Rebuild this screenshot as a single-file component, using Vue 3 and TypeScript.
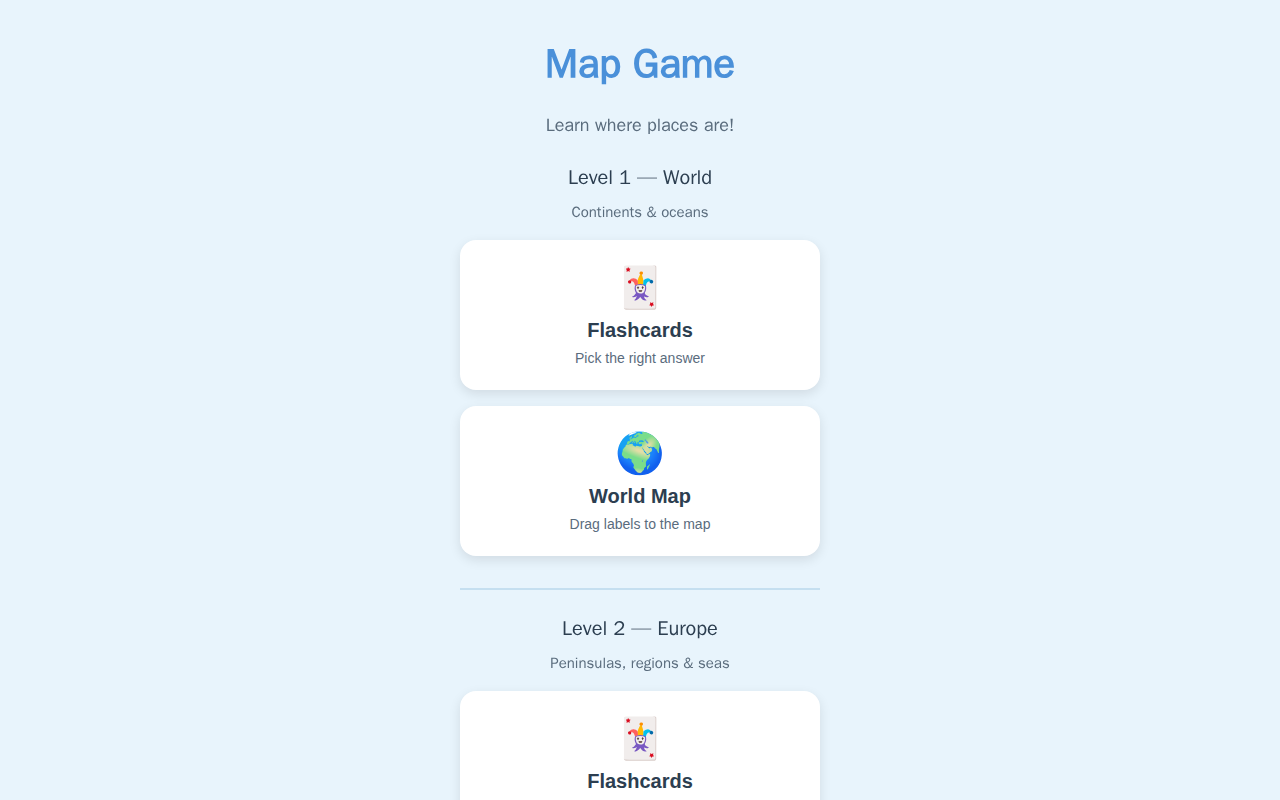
<script setup lang="ts">
interface Game { icon: string; title: string; text: string }
interface Level { title: string; place: string; text: string; games: Game[] }

const levels: Level[] = [
  {
    title: 'Level 1',
    place: 'World',
    text: 'Continents & oceans',
    games: [
      { icon: '🃏', title: 'Flashcards', text: 'Pick the right answer' },
      { icon: '🌍', title: 'World Map', text: 'Drag labels to the map' },
    ],
  },
  {
    title: 'Level 2',
    place: 'Europe',
    text: 'Peninsulas, regions & seas',
    games: [{ icon: '🃏', title: 'Flashcards', text: 'Pick the right answer' }],
  },
]
</script>

<template>
  <main class="home">
    <h1>Map Game</h1>
    <p class="intro">Learn where places are!</p>
    <section v-for="level in levels" :key="level.title" class="level">
      <h2>{{ level.title }} — {{ level.place }}</h2>
      <p class="about">{{ level.text }}</p>
      <div class="games">
        <button v-for="game in level.games" :key="game.title" type="button" class="card">
          <span class="icon">{{ game.icon }}</span>
          <span class="name">{{ game.title }}</span>
          <span class="text">{{ game.text }}</span>
        </button>
      </div>
    </section>
  </main>
</template>

<style>
body {
  margin: 0;
  background: #e8f4fc;
}
html {
  scrollbar-width: none;
}
</style>

<style scoped>
.home {
  box-sizing: border-box;
  min-height: 100vh;
  display: flex;
  flex-direction: column;
  align-items: center;
  padding: 40px 16px;
  font-family: "WenQuanYi Zen Hei", "Liberation Sans", sans-serif;
  color: #2c3e50;
  text-align: center;
}
h1 {
  margin: 0 0 24px;
  font-size: 40px;
  font-weight: 800;
  line-height: 48px;
  color: #4a90d9;
}
.intro {
  margin: 0 0 26px;
  font-size: 18px;
  line-height: 26px;
  color: #5a6c7d;
}
.level {
  width: 100%;
  max-width: 360px;
}
.level + .level {
  margin-top: 32px;
  padding-top: 25px;
  border-top: 2px solid #c5dff0;
}
h2 {
  margin: 0 0 8px;
  font-size: 20px;
  line-height: 28px;
}
.about {
  margin: 0 0 16px;
  font-size: 15px;
  line-height: 24px;
  color: #5a6c7d;
}
.games {
  display: flex;
  flex-direction: column;
  gap: 16px;
}
.card {
  display: flex;
  flex-direction: column;
  align-items: center;
  padding: 20px 24px 24px;
  border: 0;
  border-radius: 16px;
  background: #fff;
  box-shadow: 0 4px 12px rgba(0, 0, 0, 0.1);
  font-family: "Liberation Sans", Arial, sans-serif;
  color: #2c3e50;
  cursor: pointer;
}
.icon {
  margin-bottom: 2px;
  font-size: 40px;
  line-height: 54px;
}
.name {
  margin-bottom: 6px;
  font-size: 20px;
  font-weight: 700;
  line-height: 28px;
}
.text {
  font-size: 14px;
  line-height: 16px;
  color: #5a6c7d;
}
</style>
